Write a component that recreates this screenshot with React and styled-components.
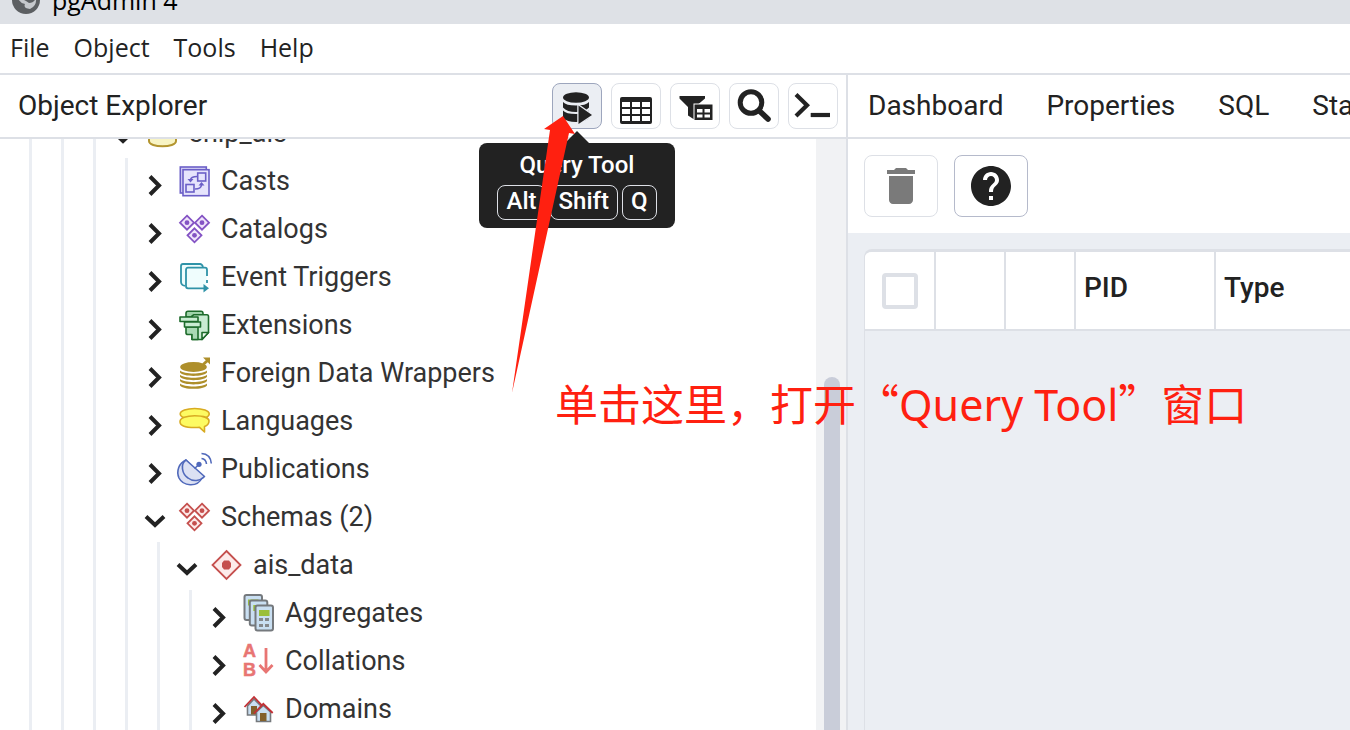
//Libraries
import React, { useState } from "react";
import styled, { createGlobalStyle } from "styled-components";
// Icons
import { MdDelete, MdHelp } from "react-icons/md";

const GlobalStyle = createGlobalStyle`
  * {
    box-sizing: border-box;
  }
  body {
    margin: 0;
    overflow: hidden;
    color: #222;
    background: #fff;
    font-family: Roboto, "Liberation Sans", sans-serif;
  }
  svg {
    display: block;
    flex: none;
    overflow: visible;
  }
`;

const menus = ["File", "Object", "Tools", "Help"];
const tabs = ["Dashboard", "Properties", "SQL", "Statistics"];

const nodes = [
  { label: "ship_ais", icon: "database", depth: 3, open: true },
  { label: "Casts", icon: "casts", depth: 4 },
  { label: "Catalogs", icon: "catalogs", depth: 4 },
  { label: "Event Triggers", icon: "triggers", depth: 4 },
  { label: "Extensions", icon: "extensions", depth: 4 },
  { label: "Foreign Data Wrappers", icon: "wrappers", depth: 4 },
  { label: "Languages", icon: "languages", depth: 4 },
  { label: "Publications", icon: "publications", depth: 4 },
  { label: "Schemas (2)", icon: "schemas", depth: 4, open: true },
  { label: "ais_data", icon: "schema", depth: 5, open: true },
  { label: "Aggregates", icon: "aggregates", depth: 6 },
  { label: "Collations", icon: "collations", depth: 6 },
  { label: "Domains", icon: "domains", depth: 6 },
];

function Diamonds({ color, fill }) {
  return (
    <g stroke={color} strokeWidth="1.8">
      {[
        [8, 8.7],
        [23, 8.7],
        [15.5, 21.3],
      ].map(([x, y]) => (
        <g key={x}>
          <path d={`M${x} ${y - 7}l7 7l-7 7l-7-7z`} fill={fill} />
          <circle cx={x} cy={y} r="2.4" fill={color} stroke="none" />
        </g>
      ))}
    </g>
  );
}

function Calculator({ x, y }) {
  return (
    <g>
      <rect
        x={x}
        y={y}
        width="17.5"
        height="25"
        rx="2"
        fill="#c9dff2"
        stroke="#75797d"
        strokeWidth="2"
      />
      <rect x={x + 3.5} y={y + 4.5} width="10.5" height="6" fill="#9bbf3b" />
    </g>
  );
}

const drawings = {
  database: (
    <g stroke="#b3952f" strokeWidth="2" fill="#f8f4c4">
      <path d="M2 6V23C2 30 29 30 29 23V6z" />
      <ellipse cx="15.5" cy="6" rx="13.5" ry="5" />
    </g>
  ),
  casts: (
    <g stroke="#6b5fc7" strokeWidth="1.6" fill="#e6e4fc">
      <rect x="1.3" y="1" width="26" height="26" fill="#d5d1f5" />
      <rect x="4" y="3.7" width="26" height="26" />
      <rect x="18.7" y="7" width="8" height="8" />
      <rect x="7" y="18.5" width="8" height="7.5" />
      <path d="M18 10.5Q12 10.5 11.5 14M16 23Q22 23 22.5 19" fill="none" />
      <path
        d="M8.5 13h6l-3 3.5zM19.5 19.5h6l-3-3.5z"
        fill="#6b5fc7"
        stroke="none"
      />
    </g>
  ),
  catalogs: <Diamonds color="#8453c4" fill="#f0e4fb" />,
  triggers: (
    <g stroke="#2f93a8" strokeWidth="1.8" fill="#effdfd">
      <path
        d="M6 24L3.5 23Q2 22 2 20V4Q2 2 4 2H21Q23 2 24 5"
        strokeLinejoin="round"
      />
      <path d="M28 14V8Q28 5.7 26 5.7H9Q7 5.7 7 8V24Q7 26.3 9 26.3H27L28 14" stroke="none" />
      <path
        d="M28 14V8Q28 5.7 26 5.7H9Q7 5.7 7 8V24Q7 26.3 9 26.3H25"
        fill="none"
      />
      <path d="M24.5 22L30 26.3L24.5 30.5z" fill="#2f93a8" stroke="none" />
      <path d="M28 18v3" />
    </g>
  ),
  extensions: (
    <g stroke="#1d6b2b" strokeWidth="1.6" fill="#c9ecd2" strokeLinejoin="round">
      <path d="M7 7V3.5Q7 1.3 9 1.3H22Q24 1.3 24 3.5V7z" fill="#9fd3aa" />
      <path d="M15 4.7H28Q29.5 4.7 29.5 6.5V22.5L23 29.5H13V6z" />
      <path d="M23 29.5V22.5H29.5z" fill="#eefbf1" />
      <path d="M7 17V23Q7 24.5 9 24.5H13V29.5H19V17z" fill="#a9d9b4" />
      <rect x="1" y="7" width="18" height="4.5" />
      <rect x="5.5" y="12" width="16" height="5" />
    </g>
  ),
  wrappers: (
    <g fill="#ae8f2b">
      <ellipse cx="14.5" cy="9" rx="13.3" ry="5" />
      {[12.5, 16.8, 21.1, 25.4].map((y) => (
        <path
          key={y}
          d={`M1 ${y}C5 ${y + 4} 24 ${y + 4} 28 ${y}V${y + 2}C25 ${y + 6.5} 4 ${y + 6.5} 1 ${y + 2}z`}
        />
      ))}
      <path d="M24 -0.5H31V6.5L28.8 4.2L25 7.5L23.2 5.6L26.8 2.2z" />
    </g>
  ),
  languages: (
    <g stroke="#d8ab22" strokeWidth="1.6" fill="#fdfb62" strokeLinejoin="round">
      <ellipse cx="15.7" cy="8" rx="14.5" ry="5.5" />
      <path d="M30 15C30 11.8 24 9.8 15.7 9.8S1 12 1 15.7S7 21.5 15.7 21.5Q18 21.5 20.5 21.3L25.5 26V20.5Q30 19 30 15z" />
    </g>
  ),
  publications: (
    <g stroke="#5069bb" strokeWidth="1.6" fill="#dce1f3" strokeLinejoin="round">
      <path d="M7 6C0 9 -3 17 0 24C4 32 18 34 23 24z" />
      <path d="M7 6C1 10 3 20 9 24C14 28 21 27 25.5 22.5z" />
      <path d="M15.5 14.5L19.5 11" />
      <circle cx="20" cy="10.3" r="2.6" fill="#5069bb" stroke="none" />
      <path d="M22.5 4.5Q27 5 27.5 10M22.5 -0.5Q31.5 0 32.3 9.5" fill="none" />
    </g>
  ),
  schemas: <Diamonds color="#c5504e" fill="#fde9e8" />,
  schema: (
    <g>
      <path
        d="M15.5 1L29.5 15L15.5 29L1.5 15z"
        fill="#fdebea"
        stroke="#c5504e"
        strokeWidth="1.8"
      />
      <path
        d="M13 10.5H18L20 13V17L18 19.5H13L11 17V13z"
        fill="#c5504e"
      />
    </g>
  ),
  aggregates: (
    <g>
      <Calculator x={1.5} y={-3} />
      <Calculator x={6.8} y={2.5} />
      <Calculator x={12.5} y={7.5} />
      <path
        d="M16 20h4v3h-4zM22 20h4v3h-4zM16 26h4v3h-4zM22 26h4v3h-4z"
        fill="#85888b"
      />
    </g>
  ),
  collations: (
    <g>
      <g
        fill="#e87573"
        stroke="#e87573"
        strokeWidth="0.5"
        fontFamily="Liberation Sans, sans-serif"
        fontSize="18"
        fontWeight="700"
      >
        <text x="0" y="11">
          A
        </text>
        <text x="0" y="30">
          B
        </text>
      </g>
      <path
        d="M23 2V26M16.5 19L23 26L29.5 19"
        fill="none"
        stroke="#e87573"
        strokeWidth="2.8"
      />
    </g>
  ),
  domains: (
    <g>
      <path
        d="M4.5 12L11 5L18 12V21H4.5z"
        fill="#c9dff2"
        stroke="#75797d"
        strokeWidth="1.6"
      />
      <rect x="8" y="12" width="6" height="8.5" fill="#82602b" />
      <path d="M1.5 13L11 3L20 12.5" fill="none" stroke="#c23035" strokeWidth="1.8" />
      <path
        d="M13.5 18L20.3 11.5L27.5 18V27.5H13.5z"
        fill="#c9dff2"
        stroke="#75797d"
        strokeWidth="1.6"
      />
      <rect x="17" y="19" width="6.5" height="8" fill="#82602b" />
      <path d="M11 19.5L20.3 9.8L29.7 19" fill="none" stroke="#c23035" strokeWidth="1.8" />
    </g>
  ),
};

const toolDrawings = {
  query: (
    <g fill="#222">
      <ellipse cx="19" cy="9.5" rx="13" ry="5.2" />
      <path d="M6 14Q9 17.5 19 17.5T32 14V19.5Q28 24 19 24T6 19.5z" />
      <path d="M6 22.5Q9 26 19 26T32 22.5V30Q28 34 19 34T6 30z" />
      <path
        d="M21.5 17.5L35 27L21.5 36z"
        stroke="#ebeef3"
        strokeWidth="2.5"
        paintOrder="stroke"
      />
    </g>
  ),
  grid: (
    <g>
      <rect x="4" y="9" width="32" height="27" rx="2" fill="#222" />
      <g fill="#fff">
        {[14, 21, 28].map((y) =>
          [6, 16, 26].map((x) => (
            <rect key={`${x}-${y}`} x={x} y={y} width="8" height="5" />
          ))
        )}
      </g>
    </g>
  ),
  filter: (
    <g fill="#222">
      <path d="M4.5 8H30V10.5L20 19V32L13 27.5V19L4.5 10.5z" />
      <rect
        x="19.5"
        y="16.5"
        width="18"
        height="15.5"
        stroke="#fff"
        strokeWidth="2"
        paintOrder="stroke"
      />
      <path
        d="M22 21h5.5v3.5h-5.5zM29.5 21h5.5v3.5h-5.5zM22 26.5h5.5v3h-5.5zM29.5 26.5h5.5v3h-5.5z"
        fill="#fff"
      />
    </g>
  ),
  search: (
    <g fill="none" stroke="#222">
      <circle cx="17" cy="14.5" r="10.8" strokeWidth="5" />
      <path d="M25.5 23L34 31" strokeWidth="5.6" strokeLinecap="round" />
    </g>
  ),
  psql: (
    <g fill="none" stroke="#222">
      <path d="M3 6.5L14 17.2L3 28" strokeWidth="4.2" />
      <path d="M17.7 27H37" strokeWidth="4.2" />
    </g>
  ),
};

const tools = [
  { id: "query", name: "Query Tool" },
  { id: "grid", name: "View Data" },
  { id: "filter", name: "Filtered Rows" },
  { id: "search", name: "Search Objects" },
  { id: "psql", name: "PSQL Tool" },
];

function TreeNode({ node }) {
  return (
    <Node role="treeitem" aria-level={node.depth} aria-expanded={!!node.open}>
      {Array.from({ length: node.depth }, (_, i) => (
        <Guide key={i} />
      ))}
      <Chevron aria-hidden="true" viewBox="0 0 28 28">
        <path d={node.open ? "M5 12.5L14 21L23 12.5" : "M9 8.5L18 17.5L9 26.5"} />
      </Chevron>
      <NodeIcon aria-hidden="true" viewBox="0 0 32 32">
        {drawings[node.icon]}
      </NodeIcon>
      <NodeLabel>{node.label}</NodeLabel>
    </Node>
  );
}

export default function App() {
  const [checked, setChecked] = useState(false);

  return (
    <Window>
      <GlobalStyle />
      <TitleBar>
        <Title>
          <svg width="28" height="28" viewBox="0 0 28 28" aria-hidden="true">
            <circle cx="14" cy="14" r="14" fill="#5c5f62" />
            <path
              d="M5 10Q10 13 14 15L17 17Q22 17 24 12Q25 20 18 23Q11 22 13 18Q7 17 5 10z"
              fill="#c5c8cc"
            />
          </svg>
          pgAdmin 4
        </Title>
      </TitleBar>
      <MenuBar>
        {menus.map((menu) => (
          <MenuButton key={menu}>{menu}</MenuButton>
        ))}
      </MenuBar>

      <Workspace>
        <Explorer>
          <PanelHeader>
            <PanelTitle>Object Explorer</PanelTitle>
            <Tools>
              {tools.map((tool) => (
                <ToolSlot key={tool.id}>
                  <ToolButton $active={tool.id === "query"} aria-label={tool.name}>
                    <svg width="40" height="36" viewBox="0 0 40 36">
                      {toolDrawings[tool.id]}
                    </svg>
                  </ToolButton>
                  {tool.id === "query" && (
                    <Tooltip role="tooltip">
                      Query Tool
                      <Keys>
                        <Key>Alt</Key>
                        <Key>Shift</Key>
                        <Key>Q</Key>
                      </Keys>
                    </Tooltip>
                  )}
                </ToolSlot>
              ))}
            </Tools>
          </PanelHeader>
          <TreeArea>
            <Tree role="tree" aria-label="Object Explorer">
              {nodes.map((node) => (
                <TreeNode key={node.label} node={node} />
              ))}
            </Tree>
            <Scrollbar>
              <Thumb />
            </Scrollbar>
          </TreeArea>
        </Explorer>

        <Details>
          <TabBar>
            {tabs.map((tab) => (
              <Tab key={tab}>{tab}</Tab>
            ))}
          </TabBar>
          <Actions>
            <ActionButton disabled aria-label="Delete">
              <MdDelete size={48} />
            </ActionButton>
            <ActionButton aria-label="Help">
              <MdHelp size={48} />
            </ActionButton>
          </Actions>
          <TableArea>
            <Table>
              <colgroup>
                <Col $width={71} />
                <Col $width={70} />
                <Col $width={70} />
                <Col $width={140} />
                <col />
              </colgroup>
              <thead>
                <tr>
                  <Th $center>
                    <Checkbox
                      type="checkbox"
                      aria-label="Select all rows"
                      checked={checked}
                      onChange={() => setChecked(!checked)}
                    />
                  </Th>
                  <Th />
                  <Th />
                  <Th>PID</Th>
                  <Th>Type</Th>
                </tr>
              </thead>
            </Table>
          </TableArea>
        </Details>
      </Workspace>

      <Arrow viewBox="0 0 64 278" aria-hidden="true">
        <path d="M52 0L33 13L39 14L1 277L58 17L64 18z" />
      </Arrow>
      <Note>
        单击这里，打开“<Latin>Query Tool</Latin>”窗口
      </Note>
    </Window>
  );
}

const Window = styled.div`
  position: relative;
  display: flex;
  flex-direction: column;
  height: 100vh;
  overflow: hidden;
`;

const TitleBar = styled.header`
  display: flex;
  align-items: flex-end;
  flex: none;
  height: 24px;
  padding-left: 12px;
  overflow: hidden;
  background: #dee1e6;
`;

const Title = styled.div`
  display: flex;
  align-items: center;
  gap: 12px;
  height: 48px;
  color: #000;
  font: 25px "Open Sans", "Noto Sans", sans-serif;
`;

const MenuBar = styled.nav`
  display: flex;
  align-items: center;
  flex: none;
  gap: 24px;
  height: 51px;
  padding: 0 10px 3px;
  border-bottom: 2px solid #dde0e6;
`;

const MenuButton = styled.button`
  padding: 0;
  border: 0;
  background: none;
  color: #222;
  font: 25px "Open Sans", "Noto Sans", sans-serif;
`;

const Workspace = styled.main`
  display: grid;
  grid-template-columns: minmax(0, 848fr) minmax(0, 502fr);
  flex: 1;
  min-height: 0;
`;

const Explorer = styled.section`
  display: flex;
  flex-direction: column;
  min-height: 0;
  border-right: 2px solid #dde0e6;
`;

const PanelHeader = styled.div`
  display: flex;
  align-items: center;
  justify-content: space-between;
  flex: none;
  height: 64px;
  padding: 0 8px 0 18px;
  border-bottom: 2px solid #dde0e6;
`;

const PanelTitle = styled.h2`
  margin: 0;
  padding-bottom: 2px;
  font-size: 28px;
  font-weight: 400;
`;

const Tools = styled.div`
  display: flex;
  gap: 9px;
`;

const ToolSlot = styled.div`
  position: relative;
`;

const ToolButton = styled.button`
  display: flex;
  align-items: center;
  justify-content: center;
  width: 50px;
  height: 46px;
  padding: 0;
  border: 1px solid ${(props) => (props.$active ? "#9da6bd" : "#dde0e6")};
  border-radius: 8px;
  background: ${(props) => (props.$active ? "#ebeef3" : "#fff")};
`;

const Tooltip = styled.div`
  position: absolute;
  z-index: 2;
  top: 60px;
  left: 50%;
  display: flex;
  flex-direction: column;
  align-items: center;
  width: 196px;
  padding: 8px 0;
  border-radius: 8px;
  background: #222;
  color: #fff;
  font-size: 24px;
  font-weight: 500;
  line-height: 28px;
  transform: translateX(-50%);

  &::before {
    content: "";
    position: absolute;
    bottom: 100%;
    left: 50%;
    border: 12px solid transparent;
    border-top: 0;
    border-bottom-color: #222;
    transform: translateX(-50%);
  }
`;

const Keys = styled.div`
  display: flex;
  gap: 4px;
  margin-top: 6px;
`;

const Key = styled.kbd`
  padding: 0 8px 2px;
  border: 1px solid #dde0e6;
  border-radius: 8px;
  font: inherit;
  line-height: 31px;
`;

const TreeArea = styled.div`
  display: flex;
  flex: 1;
  min-height: 0;
  overflow: hidden;
`;

const Tree = styled.ul`
  flex: 1;
  margin: -29px 0 0;
  padding: 0;
  list-style: none;
`;

const Node = styled.li`
  display: flex;
  align-items: center;
  height: 48px;
  padding-left: 29px;
`;

const Guide = styled.span`
  flex: none;
  align-self: stretch;
  width: 32px;
  border-left: 3px solid #ebeef3;

  &:nth-last-of-type(2) {
    width: 16px;
  }
`;

const Chevron = styled.svg`
  width: 28px;
  height: 28px;
  fill: none;
  stroke: #222;
  stroke-width: 4px;
`;

const NodeIcon = styled.svg`
  width: 32px;
  height: 32px;
  margin: 0 10px;
`;

const NodeLabel = styled.span`
  padding-bottom: 2px;
  color: #333;
  font-size: 27px;
  white-space: nowrap;
`;

const Scrollbar = styled.div`
  flex: none;
  width: 30px;
  padding: 238px 6px 0 8px;
  background: #f1f2f4;
`;

const Thumb = styled.div`
  height: 100%;
  border-radius: 8px 8px 0 0;
  background: #c9cdd9;
`;

const Details = styled.section`
  display: flex;
  flex-direction: column;
  min-height: 0;
  background: #ebeef3;
`;

const TabBar = styled.div`
  display: flex;
  flex: none;
  gap: 3px;
  height: 64px;
  overflow: hidden;
  border-bottom: 2px solid #dde0e6;
  background: #fff;
`;

const Tab = styled.button`
  flex: none;
  padding: 0 20px 2px;
  border: 0;
  background: none;
  color: #222;
  font: 28px Roboto, "Liberation Sans", sans-serif;
`;

const Actions = styled.div`
  display: flex;
  gap: 16px;
  padding: 16px;
  background: #fff;
`;

const ActionButton = styled.button`
  display: flex;
  align-items: center;
  justify-content: center;
  width: 74px;
  height: 62px;
  padding: 0;
  border: 1px solid #b5bacb;
  border-radius: 8px;
  background: #fff;
  color: #222;

  &:disabled {
    border-color: #dde0e6;
    color: #7a7a7a;
  }
`;

const TableArea = styled.div`
  flex: 1;
  margin: 16px 0 0 16px;
  overflow: hidden;
  border-top: 3px solid #dde0e6;
  border-left: 1px solid #dde0e6;
  border-radius: 8px 0 0 0;
`;

const Table = styled.table`
  width: 100%;
  border-collapse: separate;
  border-spacing: 0;
  table-layout: fixed;
  background: #fff;
`;

const Col = styled.col`
  width: ${(props) => props.$width}px;
`;

const Th = styled.th`
  height: 79px;
  padding: ${(props) => (props.$center ? "0" : "0 8px 6px")};
  border-right: 2px solid #dde0e6;
  border-bottom: 2px solid #dde0e6;
  font-size: 28px;
  font-weight: 500;
  text-align: ${(props) => (props.$center ? "center" : "left")};

  &:last-child {
    border-right: 0;
  }
`;

const Checkbox = styled.input`
  width: 36px;
  height: 36px;
  margin: 0;
  border: 4px solid #dde0e6;
  border-radius: 4px;
  background: #fff;
  appearance: none;
  vertical-align: middle;

  &:checked {
    background: #326690;
  }
`;

const Arrow = styled.svg`
  position: absolute;
  z-index: 3;
  top: 116px;
  left: 511px;
  width: 64px;
  height: 278px;
  fill: #ff2010;
`;

const Note = styled.p`
  position: absolute;
  z-index: 3;
  top: 370px;
  left: 555px;
  margin: 0;
  color: #ff2010;
  font: 43px "Noto Sans CJK SC", sans-serif;
  line-height: 64px;
  white-space: nowrap;
`;

const Latin = styled.span`
  font-family: "Noto Sans", "Open Sans", sans-serif;
`;
